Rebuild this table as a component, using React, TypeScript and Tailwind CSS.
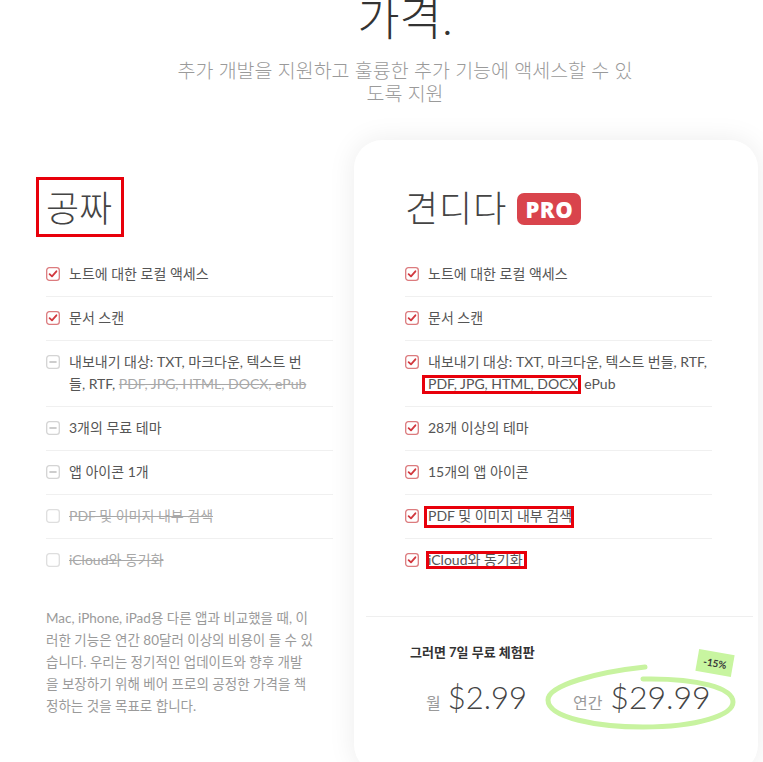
import React from "react";

type Kind = "check" | "minus" | "empty";

function Box({ kind }: { kind: Kind }) {
  if (kind === "check") {
    return (
      <svg width="14" height="14" viewBox="0 0 14 14" className="shrink-0 mt-[4px]">
        <rect x="0.7" y="0.7" width="12.6" height="12.6" rx="2.6" fill="none" stroke="#dc7b7e" strokeWidth="1.3" />
        <path d="M3.6 7.1 L6 9.4 L10.4 4.3" fill="none" stroke="#d2383e" strokeWidth="1.8" strokeLinecap="round" strokeLinejoin="round" />
      </svg>
    );
  }
  if (kind === "minus") {
    return (
      <svg width="14" height="14" viewBox="0 0 14 14" className="shrink-0 mt-[4px]">
        <rect x="0.7" y="0.7" width="12.6" height="12.6" rx="2.6" fill="none" stroke="#d4d4d4" strokeWidth="1.3" />
        <path d="M4 7 L10 7" fill="none" stroke="#bdbdbd" strokeWidth="1.6" strokeLinecap="round" />
      </svg>
    );
  }
  return (
    <svg width="14" height="14" viewBox="0 0 14 14" className="shrink-0 mt-[4px]">
      <rect x="0.7" y="0.7" width="12.6" height="12.6" rx="2.6" fill="none" stroke="#dedede" strokeWidth="1.3" />
    </svg>
  );
}

function Row({ kind, children, last }: { kind: Kind; children: React.ReactNode; last?: boolean }) {
  return (
    <li className={"flex items-start gap-[9px] pt-[10px] pb-[11px] " + (last ? "" : "border-b border-[#f0f0f0]")}>
      <Box kind={kind} />
      <div className="text-[14px] leading-[22px] text-[#555]">{children}</div>
    </li>
  );
}

function Mark({ children, cls }: { children: React.ReactNode; cls: string }) {
  return (
    <span className="relative">
      {children}
      <span className={"absolute border-[3px] border-[#e8000b] pointer-events-none " + cls} />
    </span>
  );
}

const Strike = ({ children }: { children: React.ReactNode }) => (
  <span className="line-through text-[#a8a8a8]">{children}</span>
);

export default function App() {
  return (
    <div
      className="min-h-screen bg-white overflow-hidden text-[#444]"
      style={{ fontFamily: 'Lato, "Noto Sans CJK KR", sans-serif' }}
    >
      <div className="w-[810px] flex flex-col items-center">
        <h1 className="text-[46px] leading-none font-light text-[#333] mt-[-5px]">가격.</h1>
        <p className="mt-[18px] w-[462px] text-center text-[19.5px] leading-[23px] text-[#9a9a9a] font-light">
          추가 개발을 지원하고 훌륭한 추가 기능에 액세스할 수 있도록 지원
        </p>
      </div>

      <div className="flex items-start mt-[35px] pl-[46px] gap-[21px]">
        {/* Free column */}
        <div className="w-[287px] pt-[46px] shrink-0">
          <h2 className="text-[36px] leading-[44px] font-light text-[#444]">
            <span className="relative inline-block">
              공짜
              <span className="absolute -left-[10px] -right-[12px] -top-[9px] -bottom-[7px] border-[3px] border-[#e8000b]" />
            </span>
          </h2>
          <ul className="mt-[23px]">
            <Row kind="check">노트에 대한 로컬 액세스</Row>
            <Row kind="check">문서 스캔</Row>
            <Row kind="minus">
              내보내기 대상: TXT, 마크다운, 텍스트 번
              <br />
              들, RTF, <Strike>PDF, JPG, HTML, DOCX, ePub</Strike>
            </Row>
            <Row kind="minus">3개의 무료 테마</Row>
            <Row kind="minus">앱 아이콘 1개</Row>
            <Row kind="empty">
              <Strike>PDF 및 이미지 내부 검색</Strike>
            </Row>
            <Row kind="empty" last>
              <Strike>iCloud와 동기화</Strike>
            </Row>
          </ul>
          <p className="mt-[25px] whitespace-nowrap text-[13.5px] leading-[22px] text-[#9a9a9a]">
            Mac, iPhone, iPad용 다른 앱과 비교했을 때, 이
            <br />
            러한 기능은 연간 80달러 이상의 비용이 들 수 있
            <br />
            습니다. 우리는 정기적인 업데이트와 향후 개발
            <br />
            을 보장하기 위해 베어 프로의 공정한 가격을 책
            <br />
            정하는 것을 목표로 합니다.
          </p>
        </div>

        {/* Pro card */}
        <div className="w-[404px] shrink-0 rounded-[28px] bg-white shadow-[0_0_28px_rgba(0,0,0,0.08)] pt-[46px] pl-[51px] pr-[46px] pb-[56px]">
          <div className="flex items-center gap-[10px]">
            <h2 className="text-[36px] leading-[44px] font-light text-[#444] tracking-[1px]">견디다</h2>
            <span
              className="inline-flex items-center justify-center w-[64px] h-[32px] mt-[2px] rounded-[7px] bg-[#d9444c] text-white text-[22px] font-extrabold tracking-[0.5px]"
              style={{ fontFamily: '"Open Sans", Lato, sans-serif' }}
            >
              PRO
            </span>
          </div>
          <ul className="mt-[23px]">
            <Row kind="check">노트에 대한 로컬 액세스</Row>
            <Row kind="check">문서 스캔</Row>
            <Row kind="check">
              내보내기 대상: TXT, 마크다운, 텍스트 번들, RTF,{" "}
              <Mark cls="-left-[6px] -right-[3px] -top-[0px] -bottom-[2px]">PDF, JPG, HTML, DOCX</Mark>, ePub
            </Row>
            <Row kind="check">28개 이상의 테마</Row>
            <Row kind="check">15개의 앱 아이콘</Row>
            <Row kind="check">
              <Mark cls="-left-[4px] -right-[2px] -top-[1px] -bottom-[4px]">PDF 및 이미지 내부 검색</Mark>
            </Row>
            <Row kind="check" last>
              <Mark cls="-left-[2px] -right-[4px] -top-[0px] -bottom-[1px]">iCloud와 동기화</Mark>
            </Row>
          </ul>

          <div className="mt-[34px] -ml-[39px] -mr-[41px] border-t border-[#efefef] pl-[44px] pt-[25px]">
            <div className="text-[13px] leading-[20px] font-bold text-[#333]">그러면 7일 무료 체험판</div>
            <div className="relative mt-[15px] pl-[16px] flex items-baseline h-[40px]">
              <svg
                className="absolute left-[128px] top-[-22px]"
                width="200"
                height="80"
                viewBox="0 0 200 80"
              >
                <path
                  d="M107 12 C60 17, 10 30, 10 45 C10 63, 60 72, 105 72 C160 72, 195 60, 195 47 C195 33, 160 23, 105 24"
                  fill="none"
                  stroke="#c8f3a0"
                  strokeWidth="5"
                  strokeLinecap="round"
                />
              </svg>
              <span className="relative text-[16px] text-[#9a9a9a] mr-[7px]">월</span>
              <span className="relative text-[31px] leading-[40px] font-light text-[#444]">$2.99</span>
              <span className="relative text-[16px] text-[#9a9a9a] ml-[46px] mr-[8px]">연간</span>
              <span className="relative text-[32px] leading-[40px] font-light text-[#444]">$29.99</span>
              <span className="absolute left-[287px] top-[-25px] w-[36px] h-[22px] rotate-[10deg] bg-[#c8f5a0] flex items-center justify-center text-[10px] font-bold text-[#3a3a3a]">
                -15%
              </span>
            </div>
          </div>
        </div>
      </div>
    </div>
  );
}
